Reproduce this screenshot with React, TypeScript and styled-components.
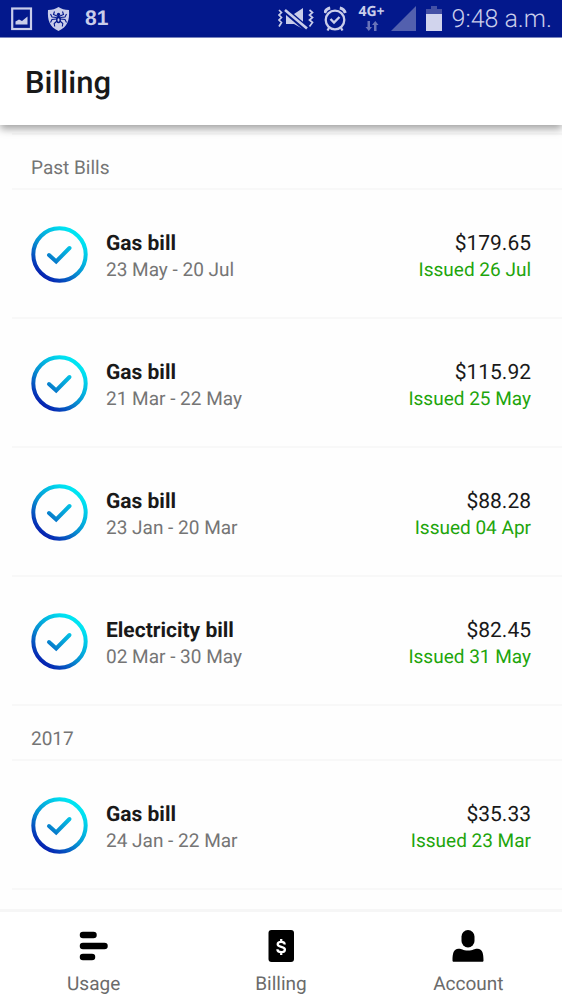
import React from "react";
import styled, { createGlobalStyle } from "styled-components";

const GlobalStyle = createGlobalStyle`
  * { box-sizing: border-box; }
  body {
    margin: 0;
    background: #fefefe;
    color: #191919;
    font-family: Roboto, "Liberation Sans", sans-serif;
    text-rendering: geometricPrecision;
  }
`;

const Screen = styled.div`
  display: flex;
  flex-direction: column;
  height: 100vh;
  overflow: hidden;
`;

const StatusBar = styled.div`
  display: flex;
  flex: none;
  align-items: center;
  justify-content: space-between;
  height: 38px;
  padding: 0 10px 0 11px;
  background: #03188c;
  border-bottom: 1px solid #7f8bc8;
  color: #c9cdea;
`;

const StatusGroup = styled.div<{ $gap: number }>`
  display: flex;
  align-items: center;
  gap: ${(p) => p.$gap}px;

  svg {
    display: block;
    flex: none;
  }
`;

const Battery = styled.span`
  font-family: "Liberation Sans", sans-serif;
  font-size: 21px;
  font-weight: 700;
  line-height: 36px;
`;

const Network = styled.span`
  display: flex;
  flex-direction: column;
  align-items: center;
  gap: 1px;
  width: 28px;
  font-family: "Open Sans", sans-serif;
  font-size: 14px;
  font-weight: 700;
  line-height: 14px;
`;

const Clock = styled.time`
  padding-top: 3px;
  font-size: 25px;
  font-weight: 300;
  line-height: 34px;
  white-space: nowrap;
`;

const Header = styled.header`
  position: relative;
  z-index: 1;
  display: flex;
  flex: none;
  align-items: center;
  height: 87px;
  padding: 2px 25px 0;
  background: #fff;
  box-shadow: 0 4px 8px rgba(0, 0, 0, 0.36);
`;

const Title = styled.h1`
  margin: 0;
  font-size: 31px;
  font-weight: 500;
  line-height: 40px;
`;

const Bills = styled.main`
  flex: 1;
  min-height: 0;
  padding: 8px 0 0 12px;
  overflow: hidden;
`;

const BillSections = styled.div`
  border-top: 2px solid #f8f8f8;
`;

const SectionTitle = styled.h2`
  height: 55px;
  margin: 0;
  padding: 21px 19px 0;
  border-bottom: 2px solid #f8f8f8;
  color: #757575;
  font-size: 19px;
  font-weight: 400;
  line-height: 24px;
`;

const BillList = styled.ul`
  margin: 0;
  padding: 0;
  list-style: none;
`;

const BillRow = styled.li`
  display: flex;
  align-items: center;
  height: 129px;
  padding: 2px 31px 0 19px;
  border-bottom: 2px solid #f8f8f8;

  svg {
    display: block;
    flex: none;
  }
`;

const BillText = styled.div<{ $end?: boolean }>`
  display: flex;
  flex: ${(p) => (p.$end ? "none" : "1")};
  flex-direction: column;
  padding-top: 5px;
  padding-left: ${(p) => (p.$end ? 0 : 18)}px;
  text-align: ${(p) => (p.$end ? "right" : "left")};
`;

const BillName = styled.strong`
  font-size: 21px;
  font-weight: 700;
  line-height: 26px;
`;

const Amount = styled.span`
  font-size: 21px;
  line-height: 26px;
`;

const Detail = styled.span<{ $issued?: boolean }>`
  color: ${(p) => (p.$issued ? "#1ea50c" : "#757575")};
  font-size: 19px;
  line-height: 26px;
`;

const TabBar = styled.nav`
  display: grid;
  flex: none;
  grid-template-columns: repeat(3, 1fr);
  height: 90px;
  border-top: 3px solid #f6f6f6;
  background: #fff;
`;

const Tab = styled.a`
  display: flex;
  flex-direction: column;
  align-items: center;
  gap: 8px;
  padding-top: 16px;
  color: #6b6b6b;
  font-size: 19px;
  line-height: 24px;
  text-decoration: none;

  svg {
    display: block;
    color: #000;
  }
`;

const PaidIcon = ({ id }: { id: string }) => (
  <svg width="57" height="57" viewBox="0 0 57 57" fill="none" aria-hidden="true">
    <defs>
      <linearGradient id={id} gradientUnits="userSpaceOnUse" x1="10" y1="49" x2="42" y2="8">
        <stop offset="0" stopColor="#0620b0" />
        <stop offset="0.45" stopColor="#0690d2" />
        <stop offset="1" stopColor="#00e4f2" />
      </linearGradient>
    </defs>
    <circle cx="28.5" cy="28.5" r="26.2" stroke={`url(#${id})`} strokeWidth="4" />
    <path d="M18 29 25.2 35.5 38.5 22" stroke={`url(#${id})`} strokeWidth="4" strokeLinecap="round" />
  </svg>
);

const PictureIcon = () => (
  <svg width="22" height="24" viewBox="0 0 22 24" aria-hidden="true">
    <rect x="1.2" y="1.5" width="18.8" height="20.5" fill="none" stroke="currentColor" strokeWidth="2.2" />
    <path d="M4.5 17.5v-3l3.5-2 3 1.5 5.5-4.5v8z" fill="currentColor" />
  </svg>
);

const ShieldIcon = () => (
  <svg width="24" height="26" viewBox="0 0 24 26" aria-hidden="true">
    <path d="M11.5 1c3 2 6 3 10.5 3 .7 10-1.500 17-10.500 21C2.500 21 .3 14 1 4 5.500 4 8.500 3 11.500 1z" fill="currentColor" />
    <g fill="none" stroke="#03188c" strokeWidth="1.1">
      <path d="M10 10 6.500 8.500 7.500 5.500M9.500 11.500 5 11 3.500 8M9.500 13l-4.500.5-1.500 3M10 15l-2.800 2.500.5 3M13 10l3.500-1.500-1-3M13.500 11.500l4.500-.5 1.500-3M13.500 13l4.500.5 1.500 3M13 15l2.800 2.500-.5 3" />
    </g>
    <ellipse cx="11.5" cy="13.5" rx="2.5" ry="3.7" fill="#03188c" />
    <ellipse cx="11.5" cy="14" rx="1" ry="1.7" fill="currentColor" />
    <circle cx="11.5" cy="8.5" r="1.7" fill="#03188c" />
  </svg>
);

const MuteIcon = () => (
  <svg width="36" height="26" viewBox="0 0 36 26" aria-hidden="true">
    <path d="M8 8h8l9-6v21l-9-5H8z" fill="currentColor" />
    <path d="M5 2.5 30 24" stroke="#03188c" strokeWidth="6" />
    <path d="M7 4 29 22.5" stroke="currentColor" strokeWidth="2.6" />
    <path d="m1 4 2.5 2.5L1 9l2.5 2.5L1 14l2.5 2.5L1 20.5M31.5 4l3 2.5-3 2.5 3 2.5-3 2.5 3 2.5-3 4" fill="none" stroke="currentColor" strokeWidth="1.7" />
  </svg>
);

const AlarmIcon = () => (
  <svg width="24" height="26" viewBox="2 0 24 26" fill="none" stroke="currentColor" aria-hidden="true">
    <circle cx="13" cy="14" r="9.3" strokeWidth="2.3" />
    <path d="m8.500 13 3.500 3.500 5.500-5.500" strokeWidth="2.4" />
    <path d="M2.700 7c.8-2.700 2.500-4.500 5.500-5M23.300 7c-.8-2.700-2.500-4.500-5.500-5" strokeWidth="3" />
    <path d="m7 22-1.500 2.500M19 22l1.500 2.500" strokeWidth="2.3" />
  </svg>
);

const DataIcon = () => (
  <svg width="14" height="12" viewBox="0 0 14 12" fill="#6973b9" aria-hidden="true">
    <path d="M2.500 1h2.500v6h2l-3.200 4L.5 7h2zM9 11V5H7l3.300-4L13.500 5h-2v6z" />
  </svg>
);

const SignalIcon = () => (
  <svg width="25" height="25" viewBox="0 0 25 25" aria-hidden="true">
    <path d="M25 0v25H0z" fill="#5360ae" />
  </svg>
);

const BatteryIcon = () => (
  <svg width="16" height="25" viewBox="0 0 16 25" aria-hidden="true">
    <path d="M5 0h6v3h5v5H0V3h5z" fill="#4450a5" />
    <path d="M0 8h16v17H0z" fill="#d1d4ed" />
  </svg>
);

const UsageIcon = () => (
  <svg width="30" height="36" viewBox="0 0 30 36" stroke="currentColor" strokeWidth="6.5" strokeLinecap="round" aria-hidden="true">
    <path d="M4 7h10.500M4 18h21.500M4 29h9" />
  </svg>
);

const BillingIcon = () => (
  <svg width="28" height="36" viewBox="0 0 28 36" aria-hidden="true">
    <rect x="1.5" y="2" width="25.5" height="32" rx="3" fill="currentColor" />
    <path d="M17.700 16.500c0-1.800-1.300-2.700-3.500-2.700-2.100 0-3.500.9-3.500 2.400 0 3.400 7.200 1.800 7.200 5.300 0 1.700-1.400 2.700-3.700 2.700s-3.800-1-3.800-2.900M14.200 11v3M14.200 24v3" fill="none" stroke="#fff" strokeWidth="2.3" />
  </svg>
);

const AccountIcon = () => (
  <svg width="32" height="36" viewBox="0 0 32 36" fill="currentColor" aria-hidden="true">
    <rect x="9.5" y="2" width="13" height="17.5" rx="6.5" />
    <path d="M.5 32.500c0-7 1-11.500 6-11.700 3-.2 4 1.700 9.500 1.700s6.500-1.900 9.500-1.700c5 .2 6 4.700 6 11.700 0 .8-.5 1.300-1.300 1.300H1.800c-.8 0-1.300-.5-1.300-1.300z" />
  </svg>
);

type Bill = { name: string; period: string; amount: string; issued: string };

const sections: { title: string; bills: Bill[] }[] = [
  {
    title: "Past Bills",
    bills: [
      { name: "Gas bill", period: "23 May - 20 Jul", amount: "$179.65", issued: "Issued 26 Jul" },
      { name: "Gas bill", period: "21 Mar - 22 May", amount: "$115.92", issued: "Issued 25 May" },
      { name: "Gas bill", period: "23 Jan - 20 Mar", amount: "$88.28", issued: "Issued 04 Apr" },
      { name: "Electricity bill", period: "02 Mar - 30 May", amount: "$82.45", issued: "Issued 31 May" },
    ],
  },
  {
    title: "2017",
    bills: [{ name: "Gas bill", period: "24 Jan - 22 Mar", amount: "$35.33", issued: "Issued 23 Mar" }],
  },
];

const tabs = [
  { label: "Usage", Icon: UsageIcon },
  { label: "Billing", Icon: BillingIcon },
  { label: "Account", Icon: AccountIcon },
];

export default function App() {
  return (
    <Screen>
      <GlobalStyle />
      <StatusBar>
        <StatusGroup $gap={14}>
          <PictureIcon />
          <ShieldIcon />
          <Battery>81</Battery>
        </StatusGroup>
        <StatusGroup $gap={10}>
          <MuteIcon />
          <AlarmIcon />
          <StatusGroup $gap={5}>
            <Network>
              4G+
              <DataIcon />
            </Network>
            <SignalIcon />
          </StatusGroup>
          <BatteryIcon />
          <Clock>9:48 a.m.</Clock>
        </StatusGroup>
      </StatusBar>
      <Header>
        <Title>Billing</Title>
      </Header>
      <Bills>
        <BillSections>
          {sections.map((section, s) => (
            <section key={section.title}>
              <SectionTitle>{section.title}</SectionTitle>
              <BillList>
                {section.bills.map((bill, b) => (
                  <BillRow key={bill.period}>
                    <PaidIcon id={`paid-${s}-${b}`} />
                    <BillText>
                      <BillName>{bill.name}</BillName>
                      <Detail>{bill.period}</Detail>
                    </BillText>
                    <BillText $end>
                      <Amount>{bill.amount}</Amount>
                      <Detail $issued>{bill.issued}</Detail>
                    </BillText>
                  </BillRow>
                ))}
              </BillList>
            </section>
          ))}
        </BillSections>
      </Bills>
      <TabBar>
        {tabs.map(({ label, Icon }) => (
          <Tab key={label} href={`#${label.toLowerCase()}`}>
            <Icon />
            {label}
          </Tab>
        ))}
      </TabBar>
    </Screen>
  );
}
